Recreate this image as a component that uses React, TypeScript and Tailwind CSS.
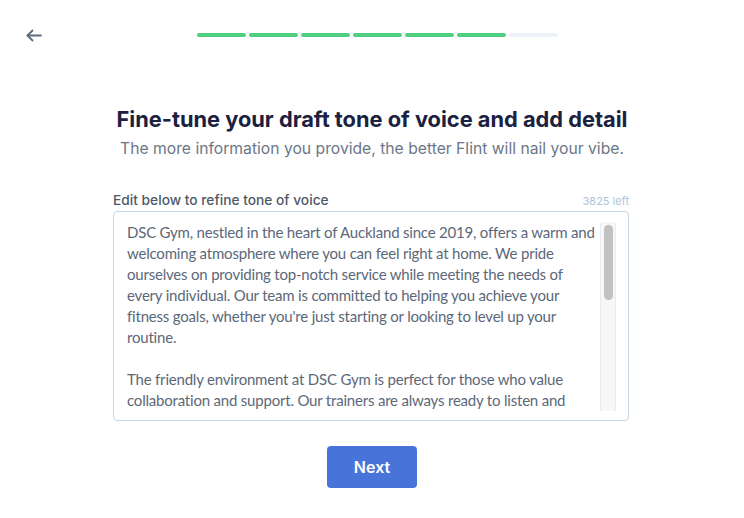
const parrafos = [
  "DSC Gym, nestled in the heart of Auckland since 2019, offers a warm and welcoming atmosphere where you can feel right at home. We pride ourselves on providing top-notch service while meeting the needs of every individual. Our team is committed to helping you achieve your fitness goals, whether you're just starting or looking to level up your routine.",
  "The friendly environment at DSC Gym is perfect for those who value collaboration and support. Our trainers are always ready to listen and",
];

const pasos = [true, true, true, true, true, true, false];

const App = () => {
  return (
    <div
      className="w-[744px] h-[518px] bg-white overflow-hidden"
      style={{ fontFamily: "Inter, Lato, sans-serif" }}
    >
      {/* ENCABEZADO */}
      <div className="flex items-center h-[70px] pl-[26px]">
        <svg width="16" height="13" viewBox="0 0 16 13" fill="none" stroke="#5f6b7a" strokeWidth="1.8" strokeLinecap="round" strokeLinejoin="round">
          <path d="M15 6.5H1.5" />
          <path d="M6.5 1.5L1.5 6.5L6.5 11.5" />
        </svg>
        <div className="flex gap-[3px] ml-[155px]">
          {pasos.map((hecho, i) => (
            <div
              key={i}
              className={`w-[49px] h-[4px] rounded-full ${
                hecho ? "bg-[#4fcf80]" : "bg-[#edf2f8]"
              }`}
            />
          ))}
        </div>
      </div>

      {/* TITULO */}
      <div className="flex flex-col items-center mt-[34px]">
        <h1 className="text-[21.8px] leading-[30px] font-bold text-[#1b2140]">
          Fine-tune your draft tone of voice and add detail
        </h1>
        <p className="text-[15.7px] leading-[30px] text-[#6b7787]">
          The more information you provide, the better Flint will nail your vibe.
        </p>
      </div>

      {/* EDITOR */}
      <div className="w-[516px] mt-[27px] ml-[113px]">
        <div className="flex items-end justify-between mb-[2px]">
          <span className="text-[13.75px] leading-[18px] font-medium text-[#4e5968]">
            Edit below to refine tone of voice
          </span>
          <span className="text-[11px] leading-[16px] text-[#aec3d6]">3825 left</span>
        </div>
        <div className="flex h-[210px] border border-[#c8d7e3] rounded-[4px] pt-[10px] pb-[9px] pl-[13px] pr-[12px]">
          <div className="flex-1 overflow-hidden font-[Lato,sans-serif] text-[15px] leading-[21px] tracking-[-0.2px] text-[#5c6879]">
            {parrafos.map((p, i) => (
              <p key={i} className="mb-[21px]">
                {p}
              </p>
            ))}
          </div>
          {/* barra de scroll */}
          <div className="w-[16px] bg-[#f7f7f7] border-x border-[#ececec] pt-[3px] flex justify-center">
            <div className="w-[9px] h-[75px] rounded-full bg-[#c1c1c1]" />
          </div>
        </div>
      </div>

      {/* BOTON */}
      <div className="flex justify-center mt-[25px]">
        <button className="w-[90px] h-[42px] rounded-[4px] bg-[#4874d9] text-white text-[16px] font-semibold">
          Next
        </button>
      </div>
    </div>
  );
};

export default App;
